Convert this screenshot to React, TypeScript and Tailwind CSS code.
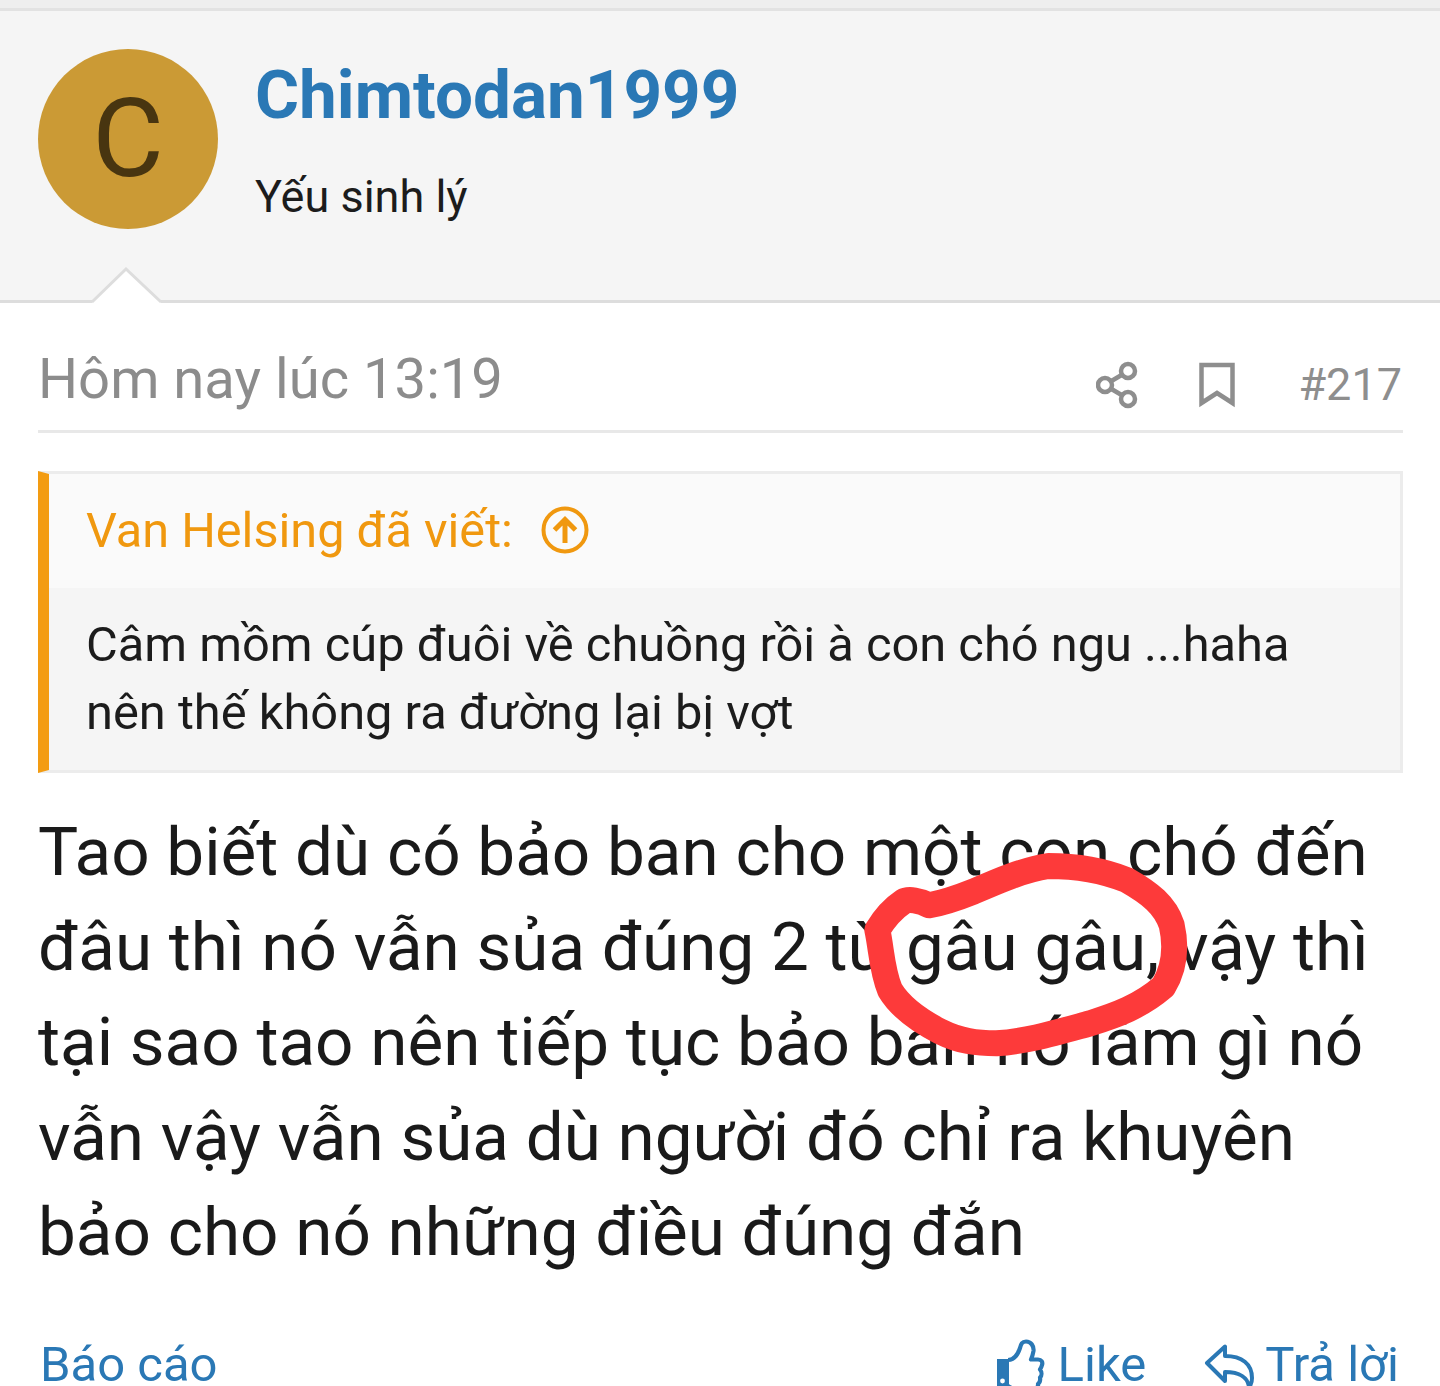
import React from "react";

const Scribble = () => (
  <svg className="absolute left-[840px] top-[830px] pointer-events-none" width="380" height="240" viewBox="0 0 1140 720" fill="none">
    <path
      d="M268 226 C240 212 205 205 190 215 C160 235 135 262 112 300 C125 360 125 420 150 480 C180 530 230 568 300 604 C360 634 410 640 470 640 C560 634 640 610 750 580 C830 555 900 530 970 470 C1000 420 1012 360 995 285 C975 225 930 190 860 150 C780 118 700 108 625 108 C550 120 480 150 400 185 C350 205 300 220 268 226 Z"
      stroke="#fd3a3a"
      strokeWidth="78"
      strokeLinecap="round"
      strokeLinejoin="round"
    />
  </svg>
);

const Notch = () => (
  <svg className="absolute left-[88px] top-[266px]" width="76" height="40" viewBox="0 0 76 40" fill="none">
    <path d="M4 37 L38 3 L73 37 Z" fill="#ffffff" />
    <path d="M4 36 L38 3 L73 36" stroke="#dddddd" strokeWidth="3" />
  </svg>
);

const ArrowCircle = () => (
  <svg className="-mt-[2px]" width="48" height="48" viewBox="0 0 48 48" fill="none" stroke="#f0980f">
    <circle cx="24" cy="24" r="21.5" strokeWidth="4" />
    <path d="M24 37 V13 M13.5 24 L24 13.5 L34.5 24" strokeWidth="5" />
  </svg>
);

const ShareIcon = () => (
  <svg width="42" height="48" viewBox="0 0 42 48" fill="none" stroke="#8e8e8e" strokeWidth="4.5">
    <circle cx="32" cy="10" r="7" />
    <circle cx="9" cy="24" r="7" />
    <circle cx="32" cy="38" r="7" />
    <path d="M15 20.3 L26 13.7 M15 27.7 L26 34.3" />
  </svg>
);

const BookmarkIcon = () => (
  <svg width="36" height="46" viewBox="0 0 36 46" fill="none" stroke="#8e8e8e" strokeWidth="4.5">
    <path d="M2.5 3 H33.5 V41 L18 31 L2.5 41 Z" />
  </svg>
);

const ThumbIcon = () => (
  <svg width="48" height="52" viewBox="0 0 48 52" fill="none" stroke="#2a78b5" strokeWidth="4.2" strokeLinejoin="round">
    <path d="M11 21 C17 21 21 15 23 9 C24 5 25 2.500 29 2.500 C34 2.500 37 7 36.500 12 C36 15 35 18 34 20.500 H41 C44.500 20.500 46 23 45 26 C44.500 28 44 29 43 30.500 C45 33 45 36.500 43 38.500 C43.500 41.500 43 43.500 41 45 C41.500 48 39 50 36 50 H20 C16 50 13 48.500 11 47" />
    <path d="M0 20 H12 V52 H0 Z" fill="#2a78b5" stroke="none" />
    <circle cx="5.500" cy="42" r="2.400" fill="#ffffff" stroke="none" />
  </svg>
);

const ReplyIcon = () => (
  <svg width="50" height="42" viewBox="0 0 50 42" fill="none" stroke="#2a78b5" strokeWidth="4" strokeLinejoin="round">
    <path d="M3 19 L21 2.500 V12 C38 12 48 20 48 34 C48 38 47 41 45 43 C44 34 36 28 21 28 V37 Z" />
  </svg>
);

export default function App() {
  return (
    <div className="relative w-[1440px] h-[1386px] overflow-hidden bg-white font-['Roboto',sans-serif]">
      <div className="h-[11px] bg-[#eeeeee] border-b-[3px] border-[#e2e2e2]" />
      <header className="relative h-[292px] bg-[#f5f5f5] border-b-[3px] border-[#dddddd] pl-[38px] pt-[38px] flex items-start">
        <div className="w-[180px] h-[180px] rounded-full bg-[#cb9a35] flex items-center justify-center text-[110px] leading-none text-[#483510]">
          C
        </div>
        <div className="ml-[37px] flex flex-col">
          <div className="text-[67.4px] leading-[90px] font-bold text-[#2a78b5] mt-[1px]">Chimtodan1999</div>
          <div className="text-[45px] leading-[60px] mt-[27px] text-[#1c1c1c]">Yếu sinh lý</div>
        </div>
      </header>
      <Notch />

      <div className="ml-[38px] mr-[37px] h-[130px] border-b-[3px] border-[#e8e8e8] flex items-center justify-between pt-[36px]">
        <div className="text-[56.2px] leading-none text-[#8c8c8c] pb-[10px]">Hôm nay lúc 13:19</div>
        <div className="flex items-center">
          <ShareIcon />
          <div className="ml-[61px]"><BookmarkIcon /></div>
          <div className="ml-[63px] text-[45px] leading-none text-[#8e8e8e] mr-[1px]">#217</div>
        </div>
      </div>

      <section className="ml-[38px] mr-[37px] mt-[38px] h-[302px] border-[3px] border-[#ececec] border-l-[11px] border-l-[#f39c12] flex flex-col">
        <div className="h-[114px] bg-[#fafafa] pl-[37px] flex items-center gap-[28px] text-[48.6px] text-[#f0980f]">
          <span>Van Helsing đã viết:</span>
          <ArrowCircle />
        </div>
        <div className="flex-1 bg-[#f5f5f5] pl-[37px] pt-[23px] text-[48.8px] leading-[68px] text-[#1c1c1c]">
          Câm mồm cúp đuôi về chuồng rồi à con chó ngu ...haha
          <br />
          nên thế không ra đường lại bị vợt
        </div>
      </section>

      <article className="ml-[38px] mr-[30px] mt-[31px] text-[67.4px] leading-[95px] text-[#1a1a1a] whitespace-nowrap">
        Tao biết dù có bảo ban cho một con chó đến
        <br />
        đâu thì nó vẫn sủa đúng 2 từ gâu gâu, vậy thì
        <br />
        tại sao tao nên tiếp tục bảo ban nó làm gì nó
        <br />
        vẫn vậy vẫn sủa dù người đó chỉ ra khuyên
        <br />
        bảo cho nó những điều đúng đắn
      </article>

      <footer className="ml-[40px] mr-[41px] mt-[60px] flex items-center justify-between text-[49px] leading-[42px] text-[#2a78b5]">
        <span>Báo cáo</span>
        <div className="flex items-center">
          <ThumbIcon />
          <span className="ml-[13px]">Like</span>
          <div className="ml-[58px]"><ReplyIcon /></div>
          <span className="ml-[11px]">Trả lời</span>
        </div>
      </footer>

      <Scribble />
    </div>
  );
}
